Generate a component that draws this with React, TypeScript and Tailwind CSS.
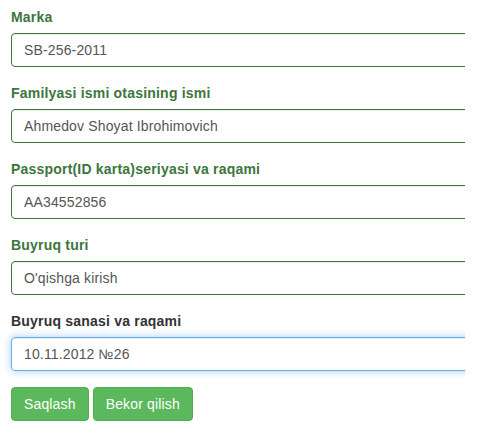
import { useEffect, useRef } from 'react';

const fields = [
  { label: 'Marka', value: 'SB-256-2011' },
  { label: 'Familyasi ismi otasining ismi', value: 'Ahmedov Shoyat Ibrohimovich' },
  { label: 'Passport(ID karta)seriyasi va raqami', value: 'AA34552856' },
  { label: 'Buyruq turi', value: "O'qishga kirish" },
];

export default function App() {
  const lastRef = useRef<HTMLInputElement>(null);

  useEffect(() => {
    const el = lastRef.current;
    if (!el) return;
    // don't let focus scroll the clipped wrapper sideways
    el.focus({ preventScroll: true });
    const n = el.value.length;
    el.setSelectionRange(n, n);
  }, []);

  return (
    <div className="w-[465px] h-[439px] overflow-hidden bg-white">
      <div className="ml-[11px] mt-[7px] text-[14px]" style={{ fontFamily: '"Liberation Sans", Arial, sans-serif' }}>
        {fields.map((f) => (
          <div key={f.label} className="mb-[16px]">
            <label className="block mb-[6px] leading-[20px] font-bold tracking-[0.2px] text-[#3c763d]">{f.label}</label>
            <input
              defaultValue={f.value}
              className="block w-[520px] h-[34px] px-[12px] rounded-[4px] border border-[#3c763d] text-[#555] leading-[20px] tracking-[0.15px] shadow-[inset_0_1px_1px_rgba(0,0,0,0.075)] outline-none"
            />
          </div>
        ))}

        {/* focused field */}
        <div className="mb-[16px]">
          <label className="block mb-[6px] leading-[20px] font-bold tracking-[0.2px] text-[#333]">Buyruq sanasi va raqami</label>
          <input
            ref={lastRef}
            defaultValue="10.11.2012 №26"
            className="block w-[520px] h-[34px] px-[12px] rounded-[4px] border border-[#66afe9] text-[#555] leading-[20px] tracking-[0.15px] shadow-[inset_0_1px_1px_rgba(0,0,0,0.075),0_0_8px_rgba(102,175,233,0.6)] outline-none caret-[#333]"
          />
        </div>

        <div className="flex gap-[4px]">
          <button className="h-[34px] px-[12px] rounded-[4px] border border-[#4cae4c] bg-[#5cb85c] text-white leading-[20px] tracking-[0.15px]">
            Saqlash
          </button>
          <button className="h-[34px] px-[12px] rounded-[4px] border border-[#4cae4c] bg-[#5cb85c] text-white leading-[20px] tracking-[0.15px]">
            Bekor qilish
          </button>
        </div>
      </div>
    </div>
  );
}
